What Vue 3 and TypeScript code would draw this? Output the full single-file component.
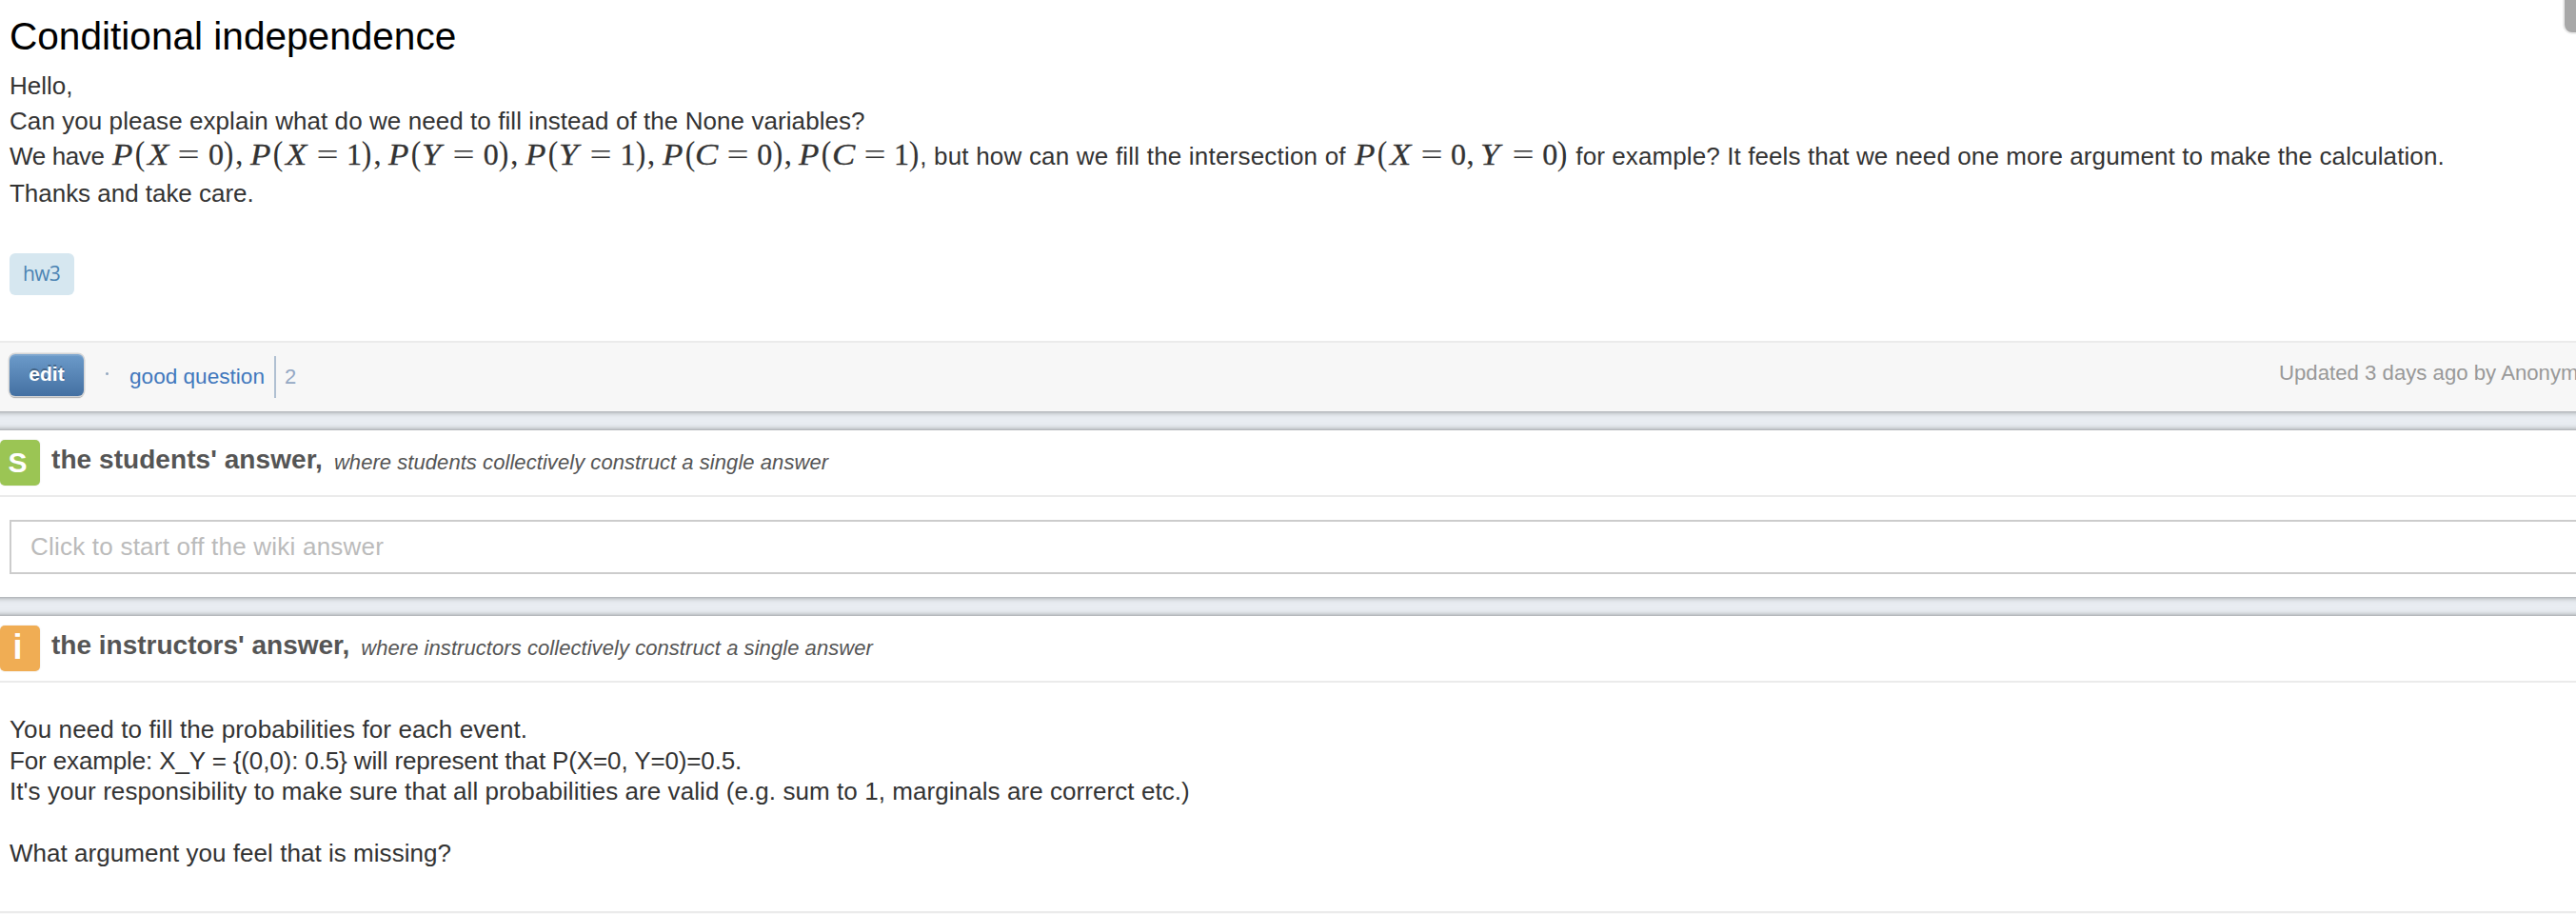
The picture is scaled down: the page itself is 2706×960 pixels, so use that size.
<script setup lang="ts">
type Kind = 'p' | 'x' | 'v' | 'open' | 'close' | 'eq' | 'num' | 'comma'

interface Token {
  text: string
  kind: Kind
}

const kinds: Record<string, Kind> = {
  P: 'p',
  X: 'x',
  Y: 'v',
  C: 'v',
  '(': 'open',
  ')': 'close',
  '=': 'eq',
  ',': 'comma',
}

const tokenize = (formula: string): Token[] =>
  [...formula].map((text) => ({ text, kind: kinds[text] ?? 'num' }))

const knownTerms = tokenize('P(X=0),P(X=1),P(Y=0),P(Y=1),P(C=0),P(C=1)')
const jointTerm = tokenize('P(X=0,Y=0)')
</script>

<template>
  <main class="page">
    <section class="card question">
      <div class="question-body">
        <h1 class="title">Conditional independence</h1>
        <p class="line hello">Hello,</p>
        <p class="line ask">Can you please explain what do we need to fill instead of the None variables?</p>
        <p class="line mixed">
          <span class="have">We have</span>
          <span v-for="(t, i) in knownTerms" :key="'k' + i" class="cell" :class="t.kind"><i class="glyph">{{ t.text }}</i></span>
          <span class="but">, but how can we fill the intersection of</span>
          <span v-for="(t, i) in jointTerm" :key="'j' + i" class="cell" :class="t.kind"><i class="glyph">{{ t.text }}</i></span>
          <span class="for">for example? It feels that we need one more argument to make the calculation.</span>
        </p>
        <p class="line thanks">Thanks and take care.</p>
        <a class="tag">hw3</a>
      </div>
      <footer class="toolbar">
        <button class="edit" type="button">edit</button>
        <span class="dot"></span>
        <a class="good">good question</a>
        <span class="count">2</span>
        <span class="updated">Updated 3 days ago by Anonym</span>
      </footer>
    </section>

    <section class="card students">
      <header class="head">
        <span class="badge green">S</span>
        <h2 class="name">the students' answer,</h2>
        <em class="hint">where students collectively construct a single answer</em>
      </header>
      <div class="wiki">Click to start off the wiki answer</div>
    </section>

    <section class="card instructors">
      <header class="head">
        <span class="badge orange">i</span>
        <h2 class="name tight">the instructors' answer,</h2>
        <em class="hint">where instructors collectively construct a single answer</em>
      </header>
      <div class="answer">
        <p class="a1">You need to fill the probabilities for each event.</p>
        <p class="a2">For example: X_Y = {(0,0): 0.5} will represent that P(X=0, Y=0)=0.5.</p>
        <p class="a3">It's your responsibility to make sure that all probabilities are valid (e.g. sum to 1, marginals are correrct etc.)</p>
        <p class="a4">What argument you feel that is missing?</p>
      </div>
      <div class="next"></div>
    </section>

    <div class="scroll"></div>
  </main>
</template>

<style>
body {
  margin: 0;
  overflow: hidden;
}
</style>

<style scoped>
.page {
  position: relative;
  width: 2706px;
  height: 960px;
  overflow: hidden;
  display: flex;
  flex-direction: column;
  gap: 20px;
  background: #e9edf2;
  color: #333;
  font: 26px/37px "Liberation Sans", Arial, sans-serif;
}
.page * { box-sizing: border-box; }
p, h1, h2 { margin: 0; white-space: nowrap; }
.card {
  flex: none;
  margin: 0 -12px;
  padding: 0 12px;
  background: #fff;
  box-shadow: 0 0 6px rgba(0, 0, 0, 0.5);
}
.question { height: 432px; }
.question-body { height: 358px; padding: 2px 10px 0; }
.title {
  height: 70px;
  font-size: 40.6px;
  font-weight: 400;
  line-height: 72px;
  color: #000;
}
.line { height: 37px; }
.hello { letter-spacing: 0; }
.ask { letter-spacing: 0.07px; }
.thanks { margin-top: 2px; letter-spacing: -0.03px; }
.mixed { display: flex; align-items: baseline; }
.mixed > span { flex: none; }
.have { width: 107px; letter-spacing: -0.36px; }
.but { width: 456px; letter-spacing: 0.2px; }
.for { margin-left: 8px; letter-spacing: 0.1px; }
.cell {
  line-height: 0;
  font-family: "Liberation Serif", "Times New Roman", serif;
  text-align: center;
}
.glyph { display: inline-block; font-style: normal; }
.p, .x, .v { text-align: left; }
.p .glyph, .x .glyph, .v .glyph {
  font-style: italic;
  font-size: 32.5px;
  transform-origin: left;
  -webkit-text-stroke: 0.3px #333;
}
.p { width: 23.9px; padding-left: 1px; }
.p .glyph { transform: scaleX(1.08); }
.x { width: 25.3px; padding-left: 2px; }
.x .glyph { transform: scaleX(1.12); }
.v { width: 24px; }
.v .glyph { transform: scaleX(1.12); }
.open, .close { width: 11.9px; font-size: 36px; }
.open .glyph, .close .glyph { transform: scaleX(0.88); }
.num { width: 15.3px; font-size: 32px; -webkit-text-stroke: 0.3px #333; }
.eq { width: 40.8px; font-size: 32px; }
.eq .glyph { transform: scaleX(1.28); }
.comma { width: 16px; padding-left: 1px; text-align: left; font-size: 34px; }
.tag {
  display: block;
  width: 68px;
  height: 44px;
  margin-top: 44px;
  padding-left: 14px;
  border-radius: 6px;
  background: #d6e7f0;
  color: #4b83b3;
  font: 21px/43px "Open Sans", sans-serif;
  letter-spacing: -0.7px;
}
.toolbar {
  display: flex;
  height: 74px;
  padding-left: 10px;
  border-top: 2px solid #ebebeb;
  background: #f7f7f7;
}
.question .toolbar { margin: 0 -12px; padding: 0 12px 0 22px; }
.edit {
  flex: none;
  width: 78px;
  height: 44px;
  margin-top: 12px;
  padding: 0 0 2px;
  border: 0;
  border-radius: 6px;
  background: linear-gradient(#6c9bca, #4470a2);
  box-shadow: inset 0 2px 0 rgba(255, 255, 255, 0.12), 0 0 0 1.5px #d6d6d6, 0 2px 1px #8f8f8f;
  color: #fff;
  font: bold 21px/42px "Liberation Sans", Arial, sans-serif;
  text-align: center;
  text-shadow: 0 -2px 0 rgba(0, 0, 0, 0.3);
}
.dot {
  flex: none;
  width: 3px;
  height: 3px;
  margin: 31px 20px 0 23px;
  border-radius: 50%;
  background: #94a8c0;
}
.good {
  flex: none;
  width: 154px;
  height: 44px;
  margin-top: 14px;
  padding-left: 2px;
  color: #4178bd;
  font-size: 22.6px;
  line-height: 44px;
  white-space: nowrap;
}
.count {
  flex: none;
  height: 44px;
  margin-top: 14px;
  padding-left: 9px;
  border-left: 2px solid #b0c0d2;
  color: #94a8c4;
  font-size: 22px;
  line-height: 44px;
}
.updated {
  flex: none;
  width: 312px;
  margin: 9px 0 0 auto;
  overflow: hidden;
  color: #999;
  font-size: 22.2px;
  line-height: 46px;
  white-space: nowrap;
}
.students { height: 175px; }
.head {
  display: flex;
  align-items: baseline;
  height: 70px;
  border-bottom: 2px solid #ebebeb;
}
.badge {
  align-self: flex-start;
  flex: none;
  width: 42px;
  height: 48px;
  margin-top: 10px;
  padding-right: 5px;
  border-radius: 5px;
  box-shadow: 0 0 2px rgba(0, 0, 0, 0.12);
  color: #fff;
  font-weight: bold;
  line-height: 48px;
  text-align: center;
}
.green { background: #9bc554; font-size: 30px; }
.orange { background: #f0ad54; font-size: 36px; line-height: 46px; }
.name {
  margin-left: 12px;
  color: #555;
  font-size: 28px;
  line-height: 62px;
  letter-spacing: 0.06px;
}
.name.tight { letter-spacing: 0; }
.hint {
  position: relative;
  top: 1px;
  margin-left: 12px;
  color: #555;
  font-size: 22px;
  letter-spacing: 0.06px;
  white-space: nowrap;
}
.wiki {
  width: 2720px;
  height: 57px;
  margin: 24px 0 0 10px;
  padding-left: 20px;
  border: 2px solid #ccc;
  color: #bbb;
  line-height: 52px;
  letter-spacing: 0.22px;
}
.instructors { height: 320px; }
.answer { height: 240px; padding: 33px 10px 0; line-height: 32.5px; }
.a1 { letter-spacing: 0.12px; }
.a2 { letter-spacing: -0.13px; }
.a3 { letter-spacing: 0.07px; }
.a4 { margin-top: 32.5px; letter-spacing: 0.04px; }
.next { height: 10px; border-top: 2px solid #ebebeb; background: #f9f9f9; }
.scroll {
  position: absolute;
  top: -20px;
  right: -10px;
  width: 24px;
  height: 56px;
  border: 2px solid #ebebeb;
  border-radius: 10px;
  background: #a8a8a8;
}
</style>
